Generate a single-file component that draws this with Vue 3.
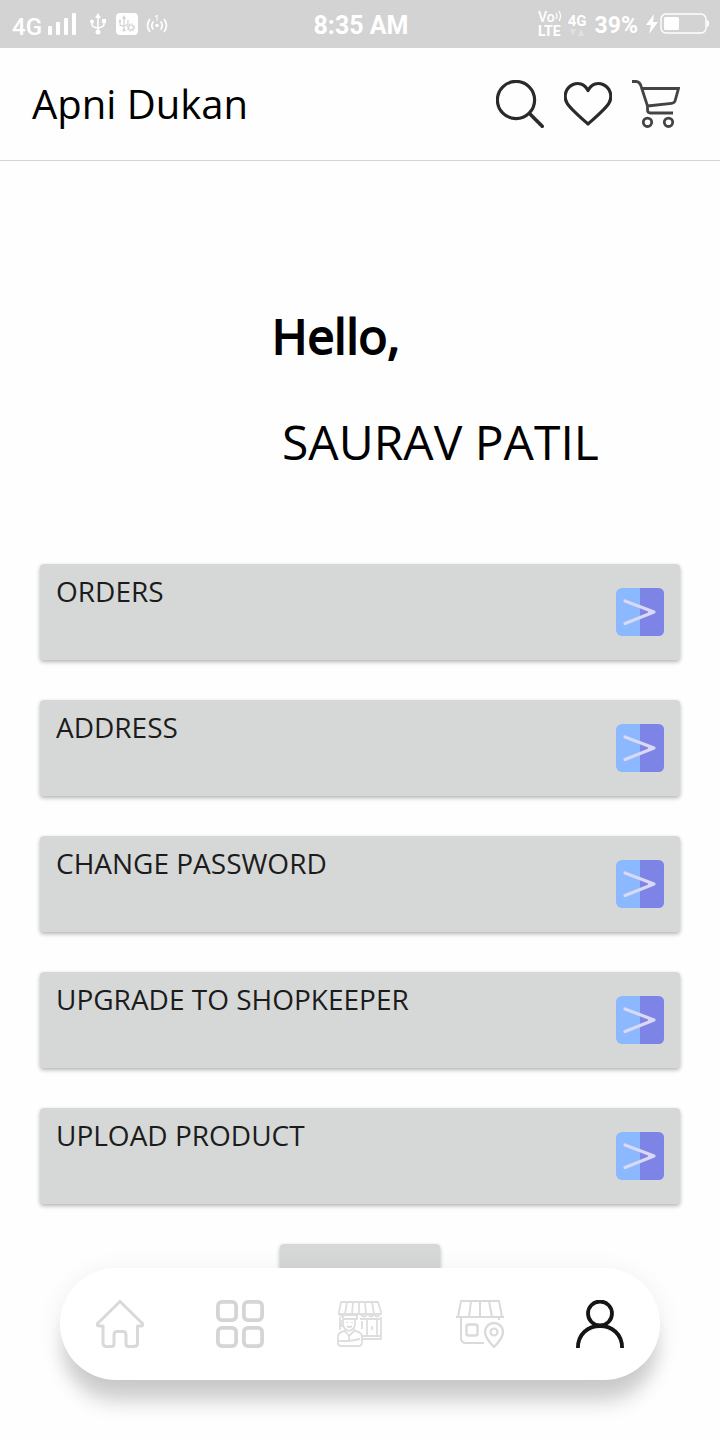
<script setup>
const actions = ['Orders', 'Address', 'Change password', 'Upgrade to shopkeeper', 'Upload product']
</script>

<template>
  <div class="app">
    <div class="status">
      <div class="status-side">
        <span class="network">4G</span>
        <svg class="signal" viewBox="0 0 28 24" width="28" height="24" fill="#fff">
          <rect x="0" y="14" width="4" height="9" rx="1" /><rect x="8" y="10" width="4" height="13" rx="1" />
          <rect x="16" y="6" width="4" height="17" rx="1" /><rect x="24" y="1" width="4" height="22" rx="1" />
        </svg>
        <svg class="usb" viewBox="0 0 16 22" width="16" height="22" fill="none" stroke="#fff" stroke-width="1.6">
          <path d="M8 3v16M2 9v3q0 2 6 3q6-1 6-4V8" />
          <path d="M8 0l3 5H5z" fill="#fff" stroke="none" />
          <circle cx="8" cy="19" r="2.5" fill="#fff" stroke="none" /><circle cx="2" cy="8.500" r="2" fill="#fff" stroke="none" />
          <rect x="12" y="6" width="4" height="4" fill="#fff" stroke="none" />
        </svg>
        <svg class="debug" viewBox="0 0 22 22" width="22" height="22" fill="none" stroke="#d3d3d3" stroke-width="1.2">
          <rect width="22" height="22" rx="4" fill="#fff" stroke="none" />
          <path d="M8 4v13M4 8v3q0 2 4 2M12 7v3q0 2-4 3" />
          <path d="M8 2l2 4H6z" fill="#d3d3d3" stroke="none" />
          <circle cx="4" cy="8" r="1.200" fill="#d3d3d3" stroke="none" /><circle cx="8" cy="17" r="1.600" fill="#d3d3d3" stroke="none" />
          <circle cx="15" cy="14.500" r="2.500" />
          <circle cx="15" cy="14.500" r="3.600" stroke-dasharray="1.4 1.42" />
        </svg>
        <svg viewBox="0 0 22 22" width="22" height="22" fill="none" stroke="#fff" stroke-width="1.700">
          <path d="M4 6q-5 6.500 0 13M7.500 8.500q-3.500 4 0 8M18 6q5 6.500 0 13M14.500 8.500q3.500 4 0 8" />
          <path d="M9 4l2-2v6" stroke-width="1" />
          <circle cx="11" cy="12.500" r="1.800" fill="#fff" stroke="none" />
        </svg>
      </div>
      <span class="clock">8:35 AM</span>
      <div class="status-side status-end">
        <div class="volte">
          <span class="volte-top">Vo<svg viewBox="0 0 7 12" width="7" height="12" fill="none" stroke="#fff" stroke-width="1.200"><path d="M1 3q2 3 0 6M4 1q3 5 0 10" /></svg></span>
          <span class="lte">LTE</span>
        </div>
        <div class="data">
          <span>4G</span>
          <svg viewBox="0 0 14 7" width="14" height="7" fill="#e0e0e0"><path d="M0 0h6L3 7zM8 7h6l-3-7z" /></svg>
        </div>
        <span class="percent">39%</span>
        <svg class="bolt" viewBox="0 0 12 20" width="12" height="20" fill="#fff"><path d="M8 0L0 11h5L3 20l9-12H7z" /></svg>
        <svg viewBox="0 0 50 22" width="50" height="22" fill="none" stroke="#fff" stroke-width="1.400">
          <rect x="1" y="1" width="45" height="19" rx="5" /><rect x="4" y="4" width="15" height="13" rx="1.500" fill="#fff" stroke="none" />
          <path d="M47 7q2 0 2 3.500T47 14z" fill="#fff" stroke="none" />
        </svg>
      </div>
    </div>

    <header class="bar">
      <h1 class="brand">Apni Dukan</h1>
      <button class="icon" aria-label="Search">
        <svg viewBox="0 0 48 48" width="48" height="48" fill="none" stroke="#2a2a2a" stroke-width="3.200">
          <circle cx="20" cy="20" r="18.600" /><path d="M33.500 33.500L47.500 47.500" stroke-width="3.600" />
        </svg>
      </button>
      <button class="icon" aria-label="Wishlist">
        <svg viewBox="0 0 48 48" width="48" height="48" fill="none" stroke="#2a2a2a" stroke-width="3.200" stroke-linejoin="round">
          <path d="M24 10.500C20 3.500 14 2.500 9 4.500C2 7.500-1 16 3 23C6 28.500 15 36 24 44C33 36 42 28.500 45 23C49 16 46 7.500 39 4.500C34 2.500 28 3.500 24 10.500Z" />
        </svg>
      </button>
      <button class="icon" aria-label="Cart">
        <svg viewBox="0 0 48 48" width="48" height="48" fill="none" stroke="#444" stroke-width="2.800">
          <path d="M0 1.500h4q4 0 5.500 6L15.500 26v4q0 3 3 3H41M10 8.500h36.500l-3.500 12.500q-.5 2-3.500 2.300L15.500 26" />
          <circle cx="15.500" cy="42.300" r="4.200" /><circle cx="36.500" cy="42.300" r="4.200" />
        </svg>
      </button>
    </header>

    <main class="account">
      <div class="greeting">
        <p class="hello">Hello,</p>
        <p class="name">SAURAV PATIL</p>
      </div>
      <button v-for="label in actions" :key="label" class="action">
        <span>{{ label }}</span>
        <svg viewBox="0 0 48 48" width="48" height="48">
          <rect width="48" height="48" rx="6" fill="#8bb8fe" />
          <path d="M24 0h18q6 0 6 6v36q0 6-6 6H24z" fill="#7d84e6" />
          <path d="M9 13L38 24L9 35.500" fill="none" stroke="#d9d9f5" stroke-width="3.200" stroke-linecap="round" stroke-linejoin="round" />
          <path d="M32 21.500L39 24L32 26.500" fill="#d9d9f5" />
        </svg>
      </button>
      <button class="action short" aria-label="Log out"></button>
    </main>

    <nav class="tabs">
      <a href="#home" aria-label="Home">
        <svg viewBox="0 0 48 48" width="48" height="48" fill="none" stroke="#d9d9d9" stroke-width="3" stroke-linejoin="round">
          <path d="M24 1.500L1.500 23.500Q1 26 3 26H7V43Q7 46.500 10.500 46.500H15.500Q18 46.500 18 44V35Q18 31.500 21 31.500H27Q30 31.500 30 35V44Q30 46.500 32.500 46.500H38Q41.500 46.500 41.500 43V26H45Q47 26 46.500 23.500Z" />
        </svg>
      </a>
      <a href="#categories" aria-label="Categories">
        <svg viewBox="0 0 48 48" width="48" height="48" fill="none" stroke="#d5d5d5" stroke-width="3.800">
          <rect x="1.900" y="1.900" width="18.200" height="18.200" rx="4" /><rect x="27.900" y="1.900" width="18.200" height="18.200" rx="4" />
          <rect x="1.900" y="27.900" width="18.200" height="18.200" rx="4" /><rect x="27.900" y="27.900" width="18.200" height="18.200" rx="4" />
        </svg>
      </a>
      <a href="#shops" aria-label="Shops">
        <svg viewBox="0 0 48 48" width="48" height="48" fill="none" stroke="#dedede" stroke-width="1.800" stroke-linejoin="round">
          <path d="M5 2h37l3 10v2H3v-2zM11 2L9 14M17 2l-1 12M23 2v12M29 2l1 12M36 2l2 12" />
          <path d="M3 14q3 4 5 0M32 14q3 5 6 0q3 5 6 0M24 14q4 5 8 0M4 17v13M45 17v22H26M25 36h20" />
          <path d="M24 19h20M31 20v17M41 20v17M36 26v4M26 21v8" />
          <path d="M7 15h14M7 15v4h14v-4M7 19v5q0 5 6 7q6-2 6-7v-5M11 22v1M16 22v1M11 26q3 2 5 0" />
          <path d="M5 20v6h3M10 29l-1 2q-6 1-7 5v7q0 3 4 3h18q2-1 2-4v-6q-1-4-7-5l-1-2M9 31l4 5l5-5M13 36v5M3 41h10l11-2" />
        </svg>
      </a>
      <a href="#nearby" aria-label="Nearby shops">
        <svg viewBox="0 0 48 48" width="48" height="48" fill="none" stroke="#dadada" stroke-width="2" stroke-linejoin="round">
          <path d="M5 1h38l3 16H2zM15 1l-2 16M24 1v16M33 1l3 16M0 17h48M5 17v21q0 5 5 5h18M43 17v3" />
          <rect x="10.500" y="24.500" width="11" height="11" rx="2" stroke-width="2.400" />
          <path d="M38 47q-9-9-9-15a9 9 0 0 1 18 0q0 6-9 15z" stroke-width="2.400" />
          <circle cx="38" cy="32" r="3.500" stroke-width="2.200" />
        </svg>
      </a>
      <a href="#account" aria-label="Account" aria-current="page">
        <svg viewBox="0 0 48 48" width="48" height="48" fill="none" stroke="#151515" stroke-width="3.800">
          <circle cx="24" cy="13.500" r="12" /><path d="M1.900 48C1.900 34 12 26 24 26S46.100 34 46.100 48" />
        </svg>
      </a>
    </nav>
  </div>
</template>

<style>
body {
  background: #fefefe;
}
</style>

<style scoped>
.app {
  min-height: 100vh;
  box-sizing: border-box;
  font-family: "Open Sans", "Noto Sans", sans-serif;
  color: #000;
}
button {
  border: 0;
  padding: 0;
  font: inherit;
  color: inherit;
  background: none;
  cursor: pointer;
}
svg {
  display: block;
  flex: none;
}
.status {
  display: flex;
  align-items: center;
  height: 48px;
  padding: 0 11px 0 12px;
  background: #d3d3d3;
  color: #fff;
  font-family: Roboto, sans-serif;
  white-space: nowrap;
}
.status-side {
  flex: 1;
  display: flex;
  align-items: center;
}
.status-end {
  justify-content: flex-end;
}
.network {
  padding-top: 6px;
  font-size: 24px;
  line-height: 28px;
  font-weight: 500;
}
.signal {
  margin-left: 6px;
}
.usb {
  margin: 0 10px 0 14px;
}
.debug {
  margin-right: 8px;
}
.clock {
  padding-top: 4px;
  font-size: 25px;
  line-height: 30px;
  font-weight: 700;
}
.volte {
  display: flex;
  flex-direction: column;
  font-size: 14px;
  line-height: 14px;
  font-weight: 500;
}
.volte-top {
  display: flex;
}
.lte {
  font-weight: 700;
}
.data {
  display: flex;
  flex-direction: column;
  align-items: center;
  margin: 0 8px 0 6px;
  font-size: 15px;
  line-height: 16px;
  font-weight: 700;
}
.percent {
  padding-top: 4px;
  font-size: 23px;
  line-height: 28px;
  font-weight: 700;
}
.bolt {
  margin: 0 2px 0 8px;
}
.status-end {
  margin-right: -1px;
}
.bar {
  display: flex;
  align-items: center;
  gap: 20px;
  height: 112px;
  padding: 0 40px 0 32px;
  border-bottom: 1px solid #d3d3d3;
}
.brand {
  flex: 1;
  margin: 0;
  font-size: 40px;
  line-height: 56px;
  font-weight: 400;
}
.account {
  display: flex;
  flex-direction: column;
  align-items: center;
  gap: 40px;
  padding: 142px 40px 100px;
}
.greeting {
  width: 100%;
  box-sizing: border-box;
  padding: 0 0 49px 232px;
}
.greeting p {
  margin: 0;
  font-size: 48px;
  line-height: 66px;
}
.greeting .hello {
  margin-bottom: 40px;
  -webkit-text-stroke: 2px #000;
}
.greeting .name {
  padding-left: 10px;
}
.action {
  display: flex;
  justify-content: space-between;
  align-items: center;
  width: 100%;
  height: 96px;
  padding: 0 16px;
  border-radius: 4px;
  background: #d6d8d7;
  color: #1c1c1c;
  font-size: 28px;
  line-height: 38px;
  text-transform: uppercase;
  box-shadow: 0 2px 4px rgba(0, 0, 0, 0.3);
}
.action span {
  align-self: flex-start;
  padding-top: 8px;
}
.action.short {
  width: 160px;
}
.tabs {
  position: fixed;
  right: 60px;
  bottom: 60px;
  left: 60px;
  display: flex;
  align-items: center;
  height: 112px;
  border-radius: 56px;
  background: #fff;
  box-shadow: 0 26px 20px -4px rgba(0, 0, 0, 0.17), 0 6px 28px rgba(0, 0, 0, 0.08);
}
.tabs a {
  flex: 1;
  display: flex;
  justify-content: center;
}
</style>
